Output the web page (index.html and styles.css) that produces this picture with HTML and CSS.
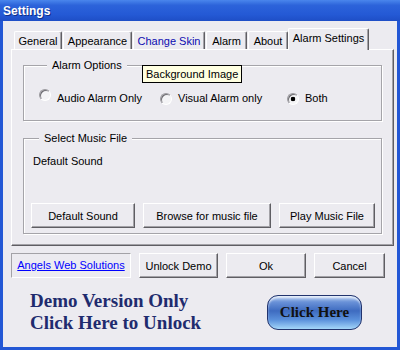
FILE: index.html
```html
<!DOCTYPE html>
<html>
<head>
<link rel="stylesheet" href="styles.css">
</head>
<body>

<div class="window">
    <div class="title-bar">Settings</div>
    <div class="frame">
        <div class="tabs">
            <div class="tab tab-general">General</div>
            <div class="tab tab-appearance">Appearance</div>
            <div class="tab tab-skin">Change Skin</div>
            <div class="tab tab-alarm">Alarm</div>
            <div class="tab tab-about">About</div>
            <div class="tab tab-active">Alarm Settings</div>
        </div>
        <div class="panel">
            <fieldset class="group group-options">
                <legend>Alarm Options</legend>
                <div class="radio-row">
                    <label class="radio radio-up"><span class="dot"></span>Audio Alarm Only</label>
                    <label class="radio"><span class="dot"></span>Visual Alarm only</label>
                    <label class="radio"><span class="dot checked"></span>Both</label>
                </div>
            </fieldset>
            <fieldset class="group group-music">
                <legend>Select Music File</legend>
                <div class="file-name">Default Sound</div>
                <div class="music-buttons">
                    <button class="btn">Default Sound</button>
                    <button class="btn">Browse for music file</button>
                    <button class="btn">Play Music File</button>
                </div>
            </fieldset>
            <div class="tooltip">Background Image</div>
        </div>
        <div class="actions">
            <div class="link-box"><a href="#">Angels Web Solutions</a></div>
            <button class="btn">Unlock Demo</button>
            <button class="btn">Ok</button>
            <button class="btn">Cancel</button>
        </div>
        <div class="demo">
            <div class="demo-text">Demo Version Only<br>Click Here to Unlock</div>
            <button class="click-here">Click Here</button>
        </div>
    </div>
</div>

</body>
</html>
```

FILE: styles.css
```css
body {
    margin: 0;
    background-color: #ECEBF0;
    font-family: "Liberation Sans", Arial, sans-serif;
    font-size: 11px;
    color: #000;
}

.window {
    width: 400px;
    height: 350px;
    display: flex;
    flex-direction: column;
}

.title-bar {
    height: 21px;
    line-height: 22px;
    padding-left: 3px;
    color: #fff;
    font-weight: bold;
    font-size: 12px;
    text-shadow: 1px 1px 0 #0F2F8A;
    background: linear-gradient(#4A86EC 0%, #2C63DA 25%, #2459D5 70%, #1E4EC6 100%);
}

.frame {
    flex: 1;
    border: 3px solid #2357D5;
    border-top: 0;
    padding: 7px 3px 0 8px;
    background-color: #ECEBF0;
}

/* Tabs */
.tabs {
    display: flex;
    align-items: flex-end;
    height: 21px;
    padding-left: 3px;
    position: relative;
    z-index: 1;
}

.tab {
    height: 18px;
    box-sizing: border-box;
    padding: 0;
    text-align: center;
    line-height: 18px;
    border: 1px solid;
    border-color: #fff #5F5E63 transparent #fff;
    border-bottom: none;
    border-radius: 2px 2px 0 0;
    margin-right: 1px;
    box-shadow: inset -1px 0 #A3A2A7;
    white-space: nowrap;
}

.tab-general { width: 48px; }
.tab-appearance { width: 69px; }
.tab-skin { width: 72px; color: #0C0CB0; }
.tab-alarm { width: 41px; }
.tab-about { width: 40px; }

.tab-active {
    width: 81px;
    height: 22px;
    margin: 0 0 -1px -1px;
    padding-bottom: 3px;
    line-height: 18px;
    background-color: #ECEBF0;
}

/* Tab page */
.panel {
    position: relative;
    height: 197px;
    box-sizing: border-box;
    border: 1px solid;
    border-color: #fff #5F5E63 #5F5E63 #fff;
    box-shadow: inset -1px -1px #A3A2A7;
    padding: 9px 11px 0 11px;
}

.group {
    margin: 0;
    border: 1px solid #A5A4A9;
    box-shadow: inset 1px 1px #fff, 1px 1px #fff;
    min-width: 0;
}

.group legend {
    margin-left: 8px;
    padding: 0 5px;
    line-height: 13px;
    background-color: #ECEBF0;
}

.group-options {
    padding: 20px 0 15px 15px;
}

.radio-row {
    display: grid;
    grid-template-columns: 121px 127px auto;
}

.radio {
    display: flex;
    align-items: center;
    gap: 6px;
    height: 13px;
    line-height: 13px;
}

.dot {
    width: 12px;
    height: 12px;
    box-sizing: border-box;
    border-radius: 50%;
    border: 1px solid;
    border-color: #9A999E #fff #fff #9A999E;
    background-color: #F4F4F6;
    box-shadow: inset 1px 1px #6E6D72;
}

.radio-up .dot {
    margin: -4px 0 4px;
}

.dot.checked {
    background: radial-gradient(circle, #000 0 2px, #F4F4F6 2.6px);
}

.group-music {
    margin-top: 11px;
    padding: 10px 0 5px 7px;
}

.file-name {
    margin-left: 2px;
    line-height: 13px;
}

.music-buttons {
    display: grid;
    grid-template-columns: 104px 128px 96px;
    column-gap: 8px;
    margin-top: 35px;
}

.btn {
    height: 25px;
    padding: 0;
    font-family: inherit;
    font-size: 11px;
    color: #000;
    background-color: #ECEBF0;
    border: 1px solid;
    border-color: #fff #5F5E63 #5F5E63 #fff;
    box-shadow: inset -1px -1px #A3A2A7;
}

.tooltip {
    position: absolute;
    left: 130px;
    top: 15px;
    height: 18px;
    box-sizing: border-box;
    padding: 0 3px;
    line-height: 16px;
    border: 1px solid #000;
    background-color: #FFFFE1;
    white-space: nowrap;
}

/* Bottom row */
.actions {
    display: grid;
    grid-template-columns: 119px 80px 80px 71px;
    column-gap: 8px;
    margin-top: 7px;
}

.link-box {
    height: 25px;
    box-sizing: border-box;
    margin-right: -1px;
    border: 1px solid;
    border-color: #A3A2A7 #fff #fff #A3A2A7;
    text-align: center;
    line-height: 23px;
}

.link-box a {
    color: #0000FF;
}

.actions .link-box + .btn {
    margin-left: 1px;
}

/* Demo banner */
.demo {
    display: flex;
    align-items: flex-start;
    padding: 12px 32px 0 19px;
}

.demo-text {
    font-family: "Liberation Serif", "Times New Roman", serif;
    font-weight: bold;
    font-size: 19px;
    line-height: 22px;
    color: #1F2B6E;
}

.click-here {
    margin: 5px 0 0 auto;
    width: 95px;
    height: 35px;
    padding: 0;
    border: 1px solid #22346E;
    border-radius: 11px;
    font-family: "Liberation Serif", "Times New Roman", serif;
    font-weight: bold;
    font-size: 15px;
    color: #111;
    background: linear-gradient(#C4D8F4 0%, #6A92D8 18%, #3E6BC0 45%, #5A90DB 72%, #A4D6F9 100%);
    box-shadow: inset 0 2px 2px rgba(255, 255, 255, 0.6);
}
```
